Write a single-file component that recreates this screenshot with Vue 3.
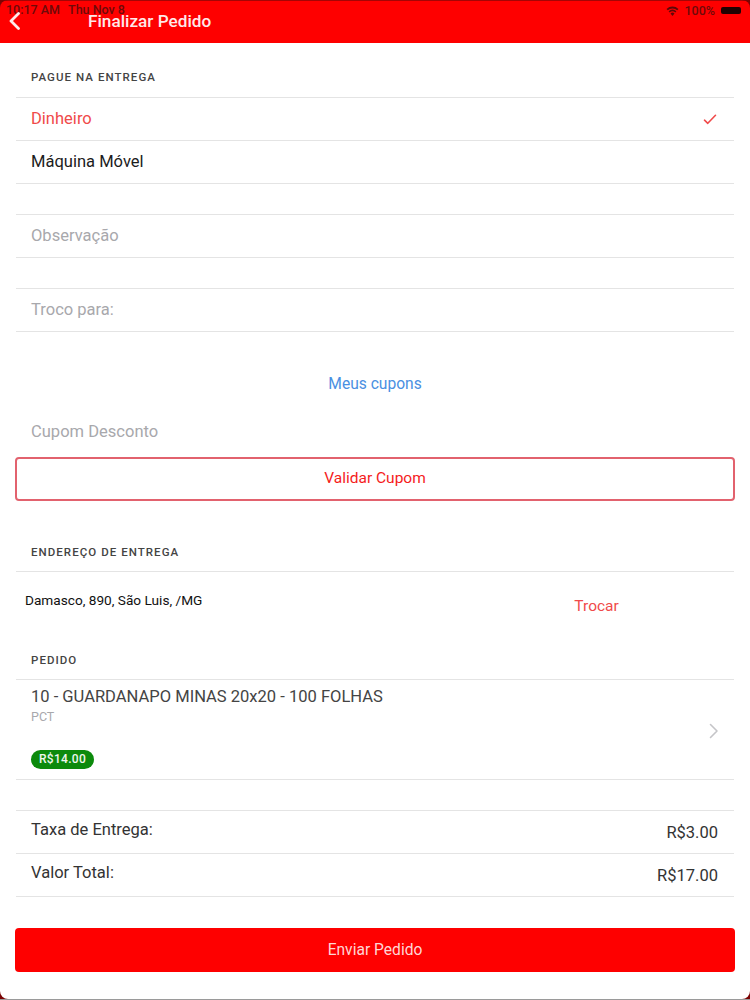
<script setup>
const payments = [
  { label: 'Dinheiro', active: true },
  { label: 'Máquina Móvel', active: false }
]
</script>

<template>
  <div class="page">
    <header class="navbar">
      <div class="status">
        <div class="status-left"><span>10:17 AM</span><span>Thu Nov 8</span></div>
        <div class="status-right">
          <svg class="wifi" width="13" height="10" viewBox="0 0 15 11" preserveAspectRatio="none">
            <path d="M7.5 11 5.2 8.3a3.4 3.4 0 0 1 4.6 0Z" />
            <path d="M4.2 7.2 3 5.8a6.9 6.9 0 0 1 9 0l-1.2 1.4a5 5 0 0 0-6.6 0Z" />
            <path d="M2 4.7.6 3.2a10.4 10.4 0 0 1 13.8 0L13 4.7a8.4 8.4 0 0 0-11 0Z" />
          </svg>
          <span>100%</span>
          <span class="battery"></span>
        </div>
      </div>
      <div class="nav-row">
        <svg class="back" width="13" height="18" viewBox="0 0 13 18">
          <path d="M10.5 1.5 3 9l7.5 7.5" />
        </svg>
        <span class="nav-title">Finalizar Pedido</span>
      </div>
    </header>

    <main class="content">
      <h2 class="section-title first">PAGUE NA ENTREGA</h2>
      <div class="list">
        <div v-for="p in payments" :key="p.label" class="row" :class="{ active: p.active }">
          <span>{{ p.label }}</span>
          <svg v-if="p.active" class="check" width="14" height="11" viewBox="0 0 14 11">
            <path d="M1.5 6.2 4.8 9.3 12.5 1.3" />
          </svg>
        </div>
      </div>

      <div class="list spaced">
        <div class="row placeholder">Observação</div>
      </div>
      <div class="list spaced">
        <div class="row placeholder">Troco para:</div>
      </div>

      <div class="coupons">Meus cupons</div>
      <div class="coupon-input">Cupom Desconto</div>
      <button class="outline-btn">Validar Cupom</button>

      <h2 class="section-title address-title">ENDEREÇO DE ENTREGA</h2>
      <div class="address">
        <span class="address-text">Damasco, 890, São Luis, /MG</span>
        <span class="swap">Trocar</span>
      </div>

      <h2 class="section-title order-title">PEDIDO</h2>
      <div class="item">
        <div class="item-info">
          <div class="item-name">10 - GUARDANAPO MINAS 20x20 - 100 FOLHAS</div>
          <div class="item-unit">PCT</div>
          <span class="price">R$14.00</span>
        </div>
        <svg class="chevron" width="10" height="16" viewBox="0 0 10 16">
          <path d="M1.5 1.5 8 8l-6.5 6.5" />
        </svg>
      </div>

      <div class="list spaced">
        <div class="row total"><span class="total-label">Taxa de Entrega:</span><span>R$3.00</span></div>
        <div class="row total"><span class="total-label">Valor Total:</span><span>R$17.00</span></div>
      </div>

      <button class="primary-btn">Enviar Pedido</button>
    </main>
  </div>
</template>

<style>
html, body { margin: 0; background: #fff; }
</style>

<style scoped>
.page {
  position: relative;
  width: 750px;
  height: 1000px;
  overflow: hidden;
  background: #fff;
  font-family: Roboto, "Liberation Sans", sans-serif;
  color: #222;
}
.page::before {
  content: "";
  position: absolute;
  left: 0;
  right: 0;
  bottom: 0;
  height: 1px;
  background: #9a9a9a;
  z-index: 1;
}
.page::after {
  content: "";
  position: absolute;
  inset: 0 0 1px;
  border-radius: 8px;
  box-shadow: 0 0 0 8px #7a0404;
  pointer-events: none;
}
.navbar {
  height: 43px;
  background: #fe0000;
  box-sizing: border-box;
  border-top: 1px solid #a50505;
}
.status {
  display: flex;
  justify-content: space-between;
  height: 17px;
  padding: 2px 5px 0 6px;
  box-sizing: border-box;
  font-size: 12.5px;
  font-weight: 500;
  line-height: 14px;
  color: #6e0a0a;
}
.status-left { display: flex; gap: 8px; }
.status-right { display: flex; align-items: center; gap: 5px; padding-right: 4px; }
.wifi { fill: #5e0808; }
.battery {
  width: 20px;
  height: 7px;
  border-radius: 2px;
  background: #1f0202;
  margin-left: 1px;
}
.nav-row {
  display: flex;
  align-items: center;
  height: 8px;
  padding-left: 8px;
  margin-top: -1px;
}
.back { fill: none; stroke: #ffe9e9; stroke-width: 2.8; stroke-linecap: round; stroke-linejoin: round; }
.nav-title {
  margin-left: 67px;
  font-size: 17.2px;
  font-weight: 500;
  color: #ffe9e9;
}
.content { padding: 0 16px; }
.section-title {
  margin: 0;
  padding-left: 15px;
  font-size: 11.5px;
  font-weight: 500;
  letter-spacing: 1.05px;
  line-height: 14px;
  color: #444;
}
.section-title.first { padding-top: 27px; padding-bottom: 13px; }
.list { border-top: 1px solid #e4e4e4; }
.list.spaced { margin-top: 30px; }
.row {
  display: flex;
  align-items: center;
  justify-content: space-between;
  height: 43px;
  box-sizing: border-box;
  padding: 0 17px 2px 15px;
  border-bottom: 1px solid #e4e4e4;
  font-size: 16.55px;
  color: #1c1c1c;
}
.row.active { color: #f04a4a; }
.check { fill: none; stroke: #f04a4a; stroke-width: 1.6; stroke-linecap: round; stroke-linejoin: round; margin-top: 2px; }
.placeholder { color: #a8a8ac; }
.coupons {
  height: 20px;
  margin-top: 42px;
  text-align: center;
  font-size: 15.6px;
  line-height: 20px;
  color: #4a90e2;
}
.coupon-input {
  height: 20px;
  margin-top: 28px;
  padding-left: 15px;
  font-size: 16.55px;
  line-height: 20px;
  color: #a8a8ac;
}
.outline-btn {
  display: block;
  width: 720px;
  height: 44px;
  margin: 15px 0 0 -1px;
  padding: 0 0 2px;
  border: 2px solid #e2626e;
  border-radius: 4px;
  background: #fff;
  font: inherit;
  font-size: 15.5px;
  color: #f51c1c;
}
.section-title.address-title { padding-top: 44px; padding-bottom: 12px; }
.address {
  display: flex;
  height: 69px;
  padding-left: 9px;
  border-top: 1px solid #e4e4e4;
  box-sizing: border-box;
}
.address-text {
  margin-top: 19px;
  font-size: 13.65px;
  line-height: 18px;
  color: #111;
}
.swap {
  margin-left: 372px;
  margin-top: 25px;
  font-size: 15.5px;
  line-height: 18px;
  color: #f04a4a;
}
.section-title.order-title { padding-top: 13px; padding-bottom: 12px; }
.item {
  display: flex;
  align-items: center;
  justify-content: space-between;
  height: 101px;
  box-sizing: border-box;
  padding: 0 15px;
  border-top: 1px solid #e4e4e4;
  border-bottom: 1px solid #e4e4e4;
}
.item-info { align-self: flex-start; padding-top: 7px; }
.item-name { font-size: 16.55px; line-height: 20px; color: #444; }
.item-unit { margin-top: 2px; font-size: 12.5px; line-height: 16px; color: #a8a8ac; }
.price {
  display: inline-block;
  margin-top: 25px;
  height: 19px;
  padding: 0 8px;
  border-radius: 10px;
  background: #0c8a0c;
  color: #eef7ee;
  font-size: 12px;
  font-weight: 500;
  line-height: 19px;
  letter-spacing: 0.3px;
}
.chevron { fill: none; stroke: #c5c5c8; stroke-width: 1.6; stroke-linecap: round; stroke-linejoin: round; margin-top: 2px; }
.total { padding: 0 16px 0 15px; color: #333; font-size: 16.5px; }
.total-label { margin-bottom: 6px; font-size: 16.55px; }
.primary-btn {
  display: block;
  width: 720px;
  height: 44px;
  margin: 31px 0 0 -1px;
  padding: 0;
  border: none;
  border-radius: 4px;
  background: #fe0000;
  font: inherit;
  font-size: 15.6px;
  color: #ffd5d5;
}
</style>
